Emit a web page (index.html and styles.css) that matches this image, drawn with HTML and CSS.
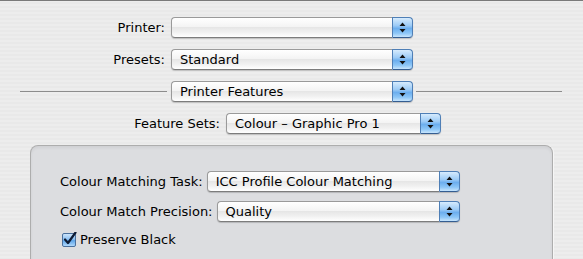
FILE: index.html
```html
<!DOCTYPE html>
<html lang="en">
<head>
    <meta charset="UTF-8">
    <title>Print - Printer Features</title>
    <link rel="stylesheet" href="styles.css">
</head>
<body>
    <div class="sheet">
        <div class="row row-top">
            <span class="label">Printer:</span>
            <div class="popup popup-top"><span class="value"></span><span class="arrows"><svg width="7" height="11" viewBox="0 0 7 11"><path d="M3.5 0.5 L6.5 4 L0.5 4 Z M0.5 7 L6.5 7 L3.5 10.5 Z" fill="#111"/></svg></span></div>
        </div>
        <div class="row row-top">
            <span class="label">Presets:</span>
            <div class="popup popup-top"><span class="value">Standard</span><span class="arrows"><svg width="7" height="11" viewBox="0 0 7 11"><path d="M3.5 0.5 L6.5 4 L0.5 4 Z M0.5 7 L6.5 7 L3.5 10.5 Z" fill="#111"/></svg></span></div>
        </div>
        <div class="row row-divider">
            <span class="rule rule-left"></span>
            <div class="popup popup-top"><span class="value">Printer Features</span><span class="arrows"><svg width="7" height="11" viewBox="0 0 7 11"><path d="M3.5 0.5 L6.5 4 L0.5 4 Z M0.5 7 L6.5 7 L3.5 10.5 Z" fill="#111"/></svg></span></div>
            <span class="rule rule-right"></span>
        </div>
        <div class="row row-sets">
            <span class="label">Feature Sets:</span>
            <div class="popup popup-sets"><span class="value">Colour – Graphic Pro 1</span><span class="arrows"><svg width="7" height="11" viewBox="0 0 7 11"><path d="M3.5 0.5 L6.5 4 L0.5 4 Z M0.5 7 L6.5 7 L3.5 10.5 Z" fill="#111"/></svg></span></div>
        </div>

        <div class="panel">
            <div class="prow">
                <span class="plabel">Colour Matching Task:</span>
                <div class="popup popup-fill"><span class="value">ICC Profile Colour Matching</span><span class="arrows"><svg width="7" height="11" viewBox="0 0 7 11"><path d="M3.5 0.5 L6.5 4 L0.5 4 Z M0.5 7 L6.5 7 L3.5 10.5 Z" fill="#111"/></svg></span></div>
            </div>
            <div class="prow">
                <span class="plabel">Colour Match Precision:</span>
                <div class="popup popup-fill"><span class="value">Quality</span><span class="arrows"><svg width="7" height="11" viewBox="0 0 7 11"><path d="M3.5 0.5 L6.5 4 L0.5 4 Z M0.5 7 L6.5 7 L3.5 10.5 Z" fill="#111"/></svg></span></div>
            </div>
            <label class="check">
                <svg class="box" width="15" height="15" viewBox="0 0 15 15">
                    <defs>
                        <linearGradient id="cb" x1="0" y1="0" x2="0" y2="1">
                            <stop offset="0" stop-color="#d2e7fb"/>
                            <stop offset="0.45" stop-color="#8cc0f2"/>
                            <stop offset="0.55" stop-color="#5ea5ea"/>
                            <stop offset="1" stop-color="#b7dcfd"/>
                        </linearGradient>
                    </defs>
                    <rect x="0.5" y="1.5" width="13" height="13" rx="1.5" fill="url(#cb)" stroke="#4a6f9c"/>
                    <path d="M3 7.5 L6 11 L13.5 0.5" fill="none" stroke="#0d1a33" stroke-width="2.2" stroke-linecap="round" stroke-linejoin="round"/>
                </svg>
                <span>Preserve Black</span>
            </label>
        </div>
    </div>
</body>
</html>
```

FILE: styles.css
```css
* {
    margin: 0;
    padding: 0;
    box-sizing: border-box;
}

body {
    width: 583px;
    height: 259px;
    overflow: hidden;
    font-family: 'DejaVu Sans', 'Liberation Sans', sans-serif;
    font-size: 13px;
    color: #000;
    background: repeating-linear-gradient(180deg, #ededed 0, #ededed 2px, #e9e9e9 2px, #e9e9e9 4px);
    border-top: 1px solid #7a7a7a;
}

.sheet {
    padding-top: 16px;
    display: flex;
    flex-direction: column;
}

.row {
    display: flex;
    align-items: center;
    height: 21px;
    margin-bottom: 11px;
}

.label {
    text-align: right;
    padding-right: 6px;
    white-space: nowrap;
}

.row-top .label {
    width: 171px;
}

.row-sets .label {
    width: 226px;
}

.row-divider {
    padding-left: 20px;
}

.rule {
    height: 1px;
    background-color: #8c8c8c;
}

.rule-left {
    width: 147px;
    margin-right: 4px;
}

.rule-right {
    width: 146px;
    margin-left: 3px;
}

/* aqua popup button */
.popup {
    display: flex;
    height: 21px;
    border-radius: 4px;
    box-shadow: 0 1px 1px rgba(0, 0, 0, 0.18);
}

.popup-top {
    width: 242px;
}

.popup-sets {
    width: 215px;
}

.popup-fill {
    flex: 1;
}

.value {
    flex: 1;
    padding-left: 8px;
    line-height: 19px;
    white-space: nowrap;
    overflow: hidden;
    border: 1px solid #9a9a9a;
    border-bottom-color: #7c7c7c;
    border-right: none;
    border-radius: 4px 0 0 4px;
    background: linear-gradient(180deg, #ffffff 0%, #f4f4f4 45%, #e6e6e6 50%, #f1f1f1 75%, #ffffff 100%);
}

.arrows {
    width: 21px;
    display: flex;
    justify-content: center;
    align-items: center;
    border: 1px solid #4f7fb6;
    border-bottom-color: #345d91;
    border-radius: 0 4px 4px 0;
    background: linear-gradient(180deg, #d6ebfd 0%, #9ccbf6 40%, #6caeee 55%, #8cc6f7 80%, #c7e5fd 100%);
}

/* grouped box */
.panel {
    margin: 0 30px 0 30px;
    height: 116px;
    border: 1px solid #adadad;
    border-bottom: none;
    border-radius: 8px 8px 0 0;
    background-color: #dcdde0;
    box-shadow: inset 0 2px 3px rgba(0, 0, 0, 0.06), 1px 0 0 #f6f6f6;
    padding: 25px 92px 0 29px;
    display: flex;
    flex-direction: column;
}

.prow {
    display: flex;
    align-items: center;
    height: 21px;
    margin-bottom: 9px;
}

.plabel {
    padding-right: 4px;
    white-space: nowrap;
}

.check {
    display: flex;
    align-items: center;
    margin-top: 1px;
    padding-left: 2px;
    gap: 3px;
}

.box {
    display: block;
}
```
